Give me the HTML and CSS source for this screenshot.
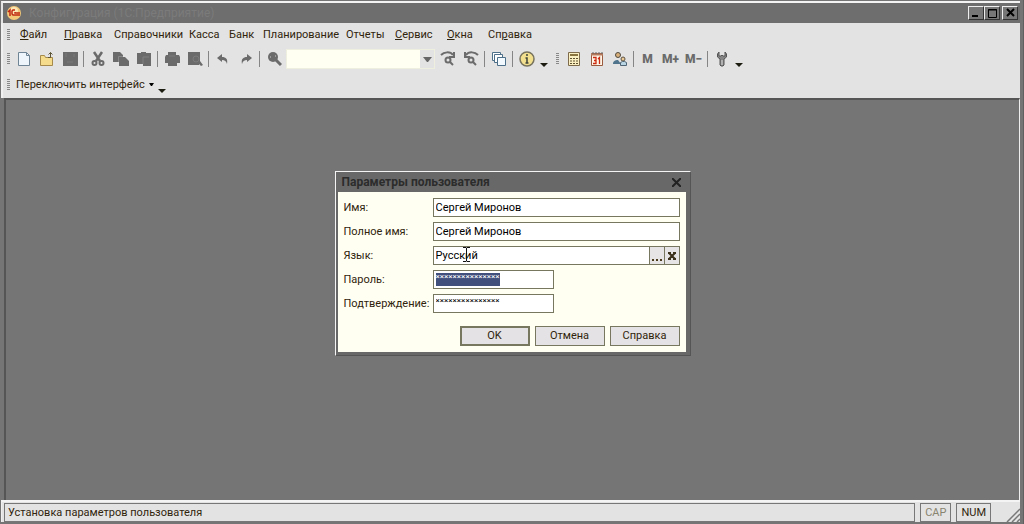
FILE: index.html
```
<!DOCTYPE html>
<html lang="ru">
<head>
  <meta charset="utf-8">
  <title>Параметры пользователя</title>
  <meta name="viewport" content="width=device-width, initial-scale=1">
  <link rel="stylesheet" href="styles.css">
</head>
<body>
  <div class="window">
    <header class="titlebar">
      <svg class="logo" viewBox="0 0 14 14"><circle cx="7" cy="7" r="7" fill="#f3c878"/><circle cx="7" cy="5" r="4" fill="#fbe6b4"/><path d="M1 6l2-2v6M8 4H6L5 5v3l1 1h7M8 6v1h5" fill="none" stroke="#c02a12" stroke-width="1.5"/></svg>
      <span class="caption">Конфигурация (1С:Предприятие)</span>
      <div class="win-buttons">
        <button type="button" aria-label="Свернуть"><svg viewBox="0 0 12 10"><path d="M2 8h6" stroke="#000" stroke-width="2"/></svg></button>
        <button type="button" aria-label="Развернуть"><svg viewBox="0 0 12 10"><path d="M2.500 1.500h8v8h-8zM2 2h9" fill="none" stroke="#000"/></svg></button>
        <button type="button" class="close" aria-label="Закрыть"><svg viewBox="0 0 12 10"><path d="M3 1l7 7M10 1L3 8" stroke="#000" stroke-width="2"/></svg></button>
      </div>
    </header>

    <div class="bars">
      <nav class="menu">
        <span class="grip"></span>
        <a href="#"><u>Ф</u>айл</a>
        <a href="#"><u>П</u>равка</a>
        <a href="#">Справочники</a>
        <a href="#">Касса</a>
        <a href="#">Банк</a>
        <a href="#">Планирование</a>
        <a href="#">Отчеты</a>
        <a href="#"><u>С</u>ервис</a>
        <a href="#"><u>О</u>кна</a>
        <a href="#">Сп<u>р</u>авка</a>
      </nav>

      <div class="toolbar">
        <span class="grip"></span>
        <button type="button" aria-label="Новый"><svg viewBox="0 0 16 16"><path d="M2.500 1.500h8l3 3v10h-11z" fill="#eef6fc" stroke="#6f8495"/><path d="M10.500 1.500v3h3" fill="none" stroke="#6f8495"/></svg></button>
        <button type="button" aria-label="Открыть"><svg viewBox="0 0 16 16"><path d="M1.500 4.500h4l1 2h7v8h-12z" fill="#f4dc8c" stroke="#a58a4c"/><path d="M9 6.500h2.500v-5M9.500 3.500l2-2 2 2" fill="none" stroke="#5e5436"/></svg></button>
        <button type="button" aria-label="Сохранить"><svg viewBox="0 0 16 16"><path d="M1 1h15v14H1z" fill="#6b6b6b"/><path d="M4 2v4M12 3v3M5 11h6" stroke="#7b7b7b"/></svg></button>
        <span class="sep"></span>
        <button type="button" aria-label="Вырезать"><svg viewBox="0 0 16 16"><path d="M4 1l6 9M12 1l-6 9" stroke="#6b6b6b" stroke-width="2.500"/><circle cx="4.500" cy="12" r="2" fill="none" stroke="#6b6b6b" stroke-width="2"/><circle cx="11.500" cy="12" r="2" fill="none" stroke="#6b6b6b" stroke-width="2"/></svg></button>
        <button type="button" aria-label="Копировать"><svg viewBox="0 0 16 16"><path d="M0 1h7l3 3v7H0zM6 6h6l4 4v5H6z" fill="#6b6b6b"/><path d="M5.500 11V5.500H10" fill="none" stroke="#888"/></svg></button>
        <button type="button" aria-label="Вставить"><svg viewBox="0 0 16 16"><path d="M1 2h4V1h5v1h5v13H7v-2H1z" fill="#6b6b6b"/><path d="M7 13V6h6" fill="none" stroke="#808080"/></svg></button>
        <span class="sep"></span>
        <button type="button" aria-label="Печать"><svg viewBox="0 0 16 16"><path d="M4 1h8v3h3l1 2v6h-3v3H4v-3H1V6l1-2h2z" fill="#6b6b6b"/><path d="M5 5h6" stroke="#7c7c7c"/></svg></button>
        <button type="button" aria-label="Просмотр"><svg viewBox="0 0 16 16"><path d="M1 1h12v9l3 4-2 1-2-2v1H1z" fill="#6b6b6b"/><circle cx="9" cy="8" r="3" fill="none" stroke="#7c7c7c"/></svg></button>
        <span class="sep"></span>
        <button type="button" aria-label="Отменить"><svg viewBox="0 0 16 16"><path d="M2 7l5-4v3c4 0 6 2 5 7-1-3-2-4-5-4v2z" fill="#6b6b6b"/></svg></button>
        <button type="button" aria-label="Вернуть"><svg viewBox="0 0 16 16"><path d="M14 7L9 3v3C5 6 3 8 4 13c1-3 2-4 5-4v2z" fill="#6b6b6b"/></svg></button>
        <span class="sep"></span>
        <button type="button" aria-label="Найти"><svg viewBox="0 0 16 16"><circle cx="7" cy="6" r="5" fill="#6b6b6b"/><path d="M10 9l5 5" stroke="#6b6b6b" stroke-width="3"/><path d="M4 6h1M9 5h1" stroke="#ccc"/></svg></button>
        <div class="search">
          <input type="text" aria-label="Строка поиска">
          <button type="button" aria-label="Список"><svg viewBox="0 0 9 5"><path d="M0 0h9L5 5H4z" fill="#666"/></svg></button>
        </div>
        <button type="button" aria-label="Найти далее"><svg viewBox="0 0 16 16"><path d="M1 4c3-3 9-4 12 0M14 1v5h-5" fill="none" stroke="#6b6b6b" stroke-width="2"/><circle cx="8" cy="9" r="2.500" fill="none" stroke="#6b6b6b" stroke-width="2"/><path d="M10 11l3 3" stroke="#6b6b6b" stroke-width="2"/></svg></button>
        <button type="button" aria-label="Найти ранее"><svg viewBox="0 0 16 16"><path d="M15 4C12 1 6 0 3 4M2 1v5h5" fill="none" stroke="#6b6b6b" stroke-width="2"/><circle cx="8" cy="9" r="2.500" fill="none" stroke="#6b6b6b" stroke-width="2"/><path d="M10 11l3 3" stroke="#6b6b6b" stroke-width="2"/></svg></button>
        <span class="sep"></span>
        <button type="button" aria-label="Окна"><svg viewBox="0 0 16 16"><g fill="#fff" stroke="#4d6f88"><path d="M1.500 1.500h8v8h-8z"/><path d="M3.500 3.500h8v8h-8z"/><path d="M6.500 6.500h8v8h-8z" fill="#f2f9ff"/></g></svg></button>
        <span class="sep"></span>
        <button type="button" aria-label="Информация"><svg viewBox="0 0 16 16"><circle cx="8" cy="8" r="7" fill="#f3e08f" stroke="#77735c" stroke-width="1.500"/><path d="M8 3v2M6.500 7H8v5M6.500 12h3" fill="none" stroke="#3f4338" stroke-width="1.500"/></svg></button>
        <button type="button" class="more" aria-label="Ещё"></button>
        <span class="grip"></span>
        <button type="button" aria-label="Калькулятор"><svg viewBox="0 0 16 16"><path d="M2.500 1.500h11v13h-11z" fill="#fbf0c2" stroke="#7d6b4b"/><path d="M4 4h8" stroke="#8a7440" stroke-width="2"/><path d="M4 7.500h8M4 10h8M4 12.500h8" stroke="#5c5030" stroke-dasharray="2 1"/></svg></button>
        <button type="button" aria-label="Календарь"><svg viewBox="0 0 16 16"><path d="M2.500 2.500h11v12h-11z" fill="#fff5e6" stroke="#9a5a40"/><path d="M2 3.500h12" stroke="#b5795c" stroke-width="2"/><path d="M4 1v2M7 1v2M10 1v2M13 1v2" stroke="#666"/><path d="M4 6.500h3v6H4M5 9.500h2M9 8l1.500-1.500V13" fill="none" stroke="#cc2a10" stroke-width="1.300"/></svg></button>
        <button type="button" aria-label="Пользователи"><svg viewBox="0 0 16 16"><circle cx="6" cy="4" r="2.500" fill="#d9b07a" stroke="#4f4a3e"/><path d="M1 13c0-3 2-4 5-4l3 4z" fill="#4f748c"/><circle cx="11" cy="8" r="2" fill="#ecca96" stroke="#5b5142"/><path d="M8.500 14.500v-3l2-1h2l2 1v3z" fill="#b9d4e2" stroke="#4f6575"/></svg></button>
        <span class="sep"></span>
        <button type="button" class="memory">M</button>
        <button type="button" class="memory">M+</button>
        <button type="button" class="memory">M−</button>
        <span class="sep"></span>
        <button type="button" aria-label="Настройка"><svg viewBox="0 0 16 16"><path d="M5 1L3.500 3v3L6 8v6l1 1h2l1-1V8l2.500-2V3L11 1v4H9L8 4 7 5H5z" fill="#858585" stroke="#555"/><path d="M8 9v5" stroke="#ddd"/></svg></button>
        <button type="button" class="more" aria-label="Ещё"></button>
      </div>

      <div class="toolbar interface-bar">
        <span class="grip"></span>
        <button type="button" class="switcher">Переключить интерфейс <svg viewBox="0 0 5 3"><path d="M0 0h5L3 3H2z"/></svg></button>
        <button type="button" class="more" aria-label="Ещё"></button>
      </div>
    </div>

    <main class="workspace">
      <form class="dialog">
        <div class="dialog-title">
          <h1>Параметры пользователя</h1>
          <button type="button" aria-label="Закрыть"><svg viewBox="0 0 9 9"><path d="M0 0l9 9M9 0L0 9" stroke="#222" stroke-width="2"/></svg></button>
        </div>
        <div class="fields">
          <label for="name">Имя:</label>
          <input type="text" id="name" value="Сергей Миронов">

          <label for="fullName">Полное имя:</label>
          <input type="text" id="fullName" value="Сергей Миронов">

          <label for="language">Язык:</label>
          <div class="picker">
            <input type="text" id="language" value="Русский">
            <button type="button" aria-label="Выбрать"><svg viewBox="0 0 14 16"><path d="M2 12h2M6 12h2M10 12h2" stroke="#4a3b1c" stroke-width="2"/></svg></button>
            <button type="button" aria-label="Очистить"><svg viewBox="0 0 14 16"><path d="M4 5l6 6M10 5l-6 6M3 5h3M8 5h3M3 11h3M8 11h3" stroke="#3d321c" stroke-width="2"/></svg></button>
            <svg class="cursor" viewBox="0 0 7 15"><path d="M0 .5h3l.5.5.5-.5h3M3.500 1v13M0 14.500h3l.5-.5.5.5h3" fill="none" stroke="#111"/></svg>
          </div>

          <label for="password">Пароль:</label>
          <div class="secret">
            <input type="text" id="password" class="selected" value="×××××××××××××××">
          </div>

          <label for="confirm">Подтверждение:</label>
          <div class="secret">
            <input type="text" id="confirm" value="×××××××××××××××">
          </div>
        </div>
        <div class="actions">
          <button type="button" class="default">OK</button>
          <button type="button">Отмена</button>
          <button type="button">Справка</button>
        </div>
      </form>
    </main>

    <footer class="status">
      <span class="message">Установка параметров пользователя</span>
      <span class="key off">CAP</span>
      <span class="key">NUM</span>
      <svg class="resize" viewBox="0 0 14 14"><path d="M1 14L14 1M6 14l8-8M11 14l3-3" stroke="#777" stroke-width="1.500"/></svg>
    </footer>
  </div>
</body>
</html>
```
FILE: styles.css
```
* {
  box-sizing: border-box;
}

body {
  margin: 0;
  font-family: Roboto, "Liberation Sans", sans-serif;
  font-size: 11px;
  line-height: 16px;
  color: #30240c;
}

button, input {
  font: inherit;
  color: inherit;
  margin: 0;
  padding: 0;
  border: 0;
  border-radius: 0;
}

button {
  background: none;
}

svg {
  display: block;
}

/* Главное окно */
.window {
  display: flex;
  flex-direction: column;
  min-height: 100vh;
  padding: 1px 3px 2px 1px;
  background: #757575;
  border-right: 1px solid #606060;
}

.titlebar {
  display: flex;
  align-items: center;
  height: 22px;
  padding: 0 2px 0 4px;
  border-top: 2px solid #f4f4f4;
  border-left: 2px solid #e4e4e4;
  background: #6e6e6e;
}

.logo {
  width: 14px;
  height: 14px;
}

.caption {
  flex: 1;
  padding-left: 8px;
  font-size: 12px;
  color: #7b7b7b;
}

.win-buttons {
  display: flex;
}

.win-buttons button {
  width: 16px;
  height: 14px;
  padding: 1px;
  border: 1px solid #333;
  border-top-color: #eee;
  border-left-color: #eee;
  background: #777;
}

.win-buttons svg {
  width: 12px;
  height: 10px;
}

.win-buttons .close {
  margin-left: 2px;
}

/* Меню и панели */
.bars {
  padding-left: 4px;
  border-left: 2px solid #f0f0f0;
  background: #e3e3e3;
}

.grip {
  flex: none;
  width: 3px;
  height: 12px;
  background: repeating-linear-gradient(#888 0 1px, #e3e3e3 1px 2px);
}

.menu {
  display: grid;
  grid-template-columns: 13px 44px 50px 75px 40px 34px 83px 49px 52px 41px 50px;
  align-items: center;
  height: 24px;
}

.menu a {
  color: inherit;
  text-decoration: none;
}

.toolbar {
  display: flex;
  align-items: center;
  height: 24px;
}

.toolbar > button {
  display: flex;
  flex: none;
  align-items: center;
  justify-content: center;
  width: 23px;
  height: 22px;
}

.toolbar > .grip:first-child {
  margin-right: 2px;
}

.toolbar > button svg {
  width: 16px;
  height: 16px;
}

.sep {
  width: 1px;
  height: 16px;
  margin: 0 2px;
  background: #858585;
}

.search {
  display: flex;
  width: 149px;
  height: 20px;
  margin: 0 1px;
  border: 1px solid #efefe0;
}

.search input {
  flex: 1;
  min-width: 0;
  background: #fffff2;
}

.search button {
  display: flex;
  align-items: center;
  justify-content: center;
  width: 14px;
}

.search svg {
  width: 9px;
  height: 5px;
}

.toolbar > .more {
  width: 12px;
}

.more::after {
  content: "";
  margin-top: 12px;
  border: 4px solid transparent;
  border-top-color: #1c1c10;
  border-bottom: 0;
}

.more + .grip {
  margin: 0 3px 0 6px;
}

.toolbar > .memory {
  color: #6b6b6b;
  font-size: 12px;
  font-weight: 900;
}

.interface-bar {
  height: 27px;
}

.toolbar > .switcher {
  gap: 4px;
  width: auto;
  padding: 0 2px 0 4px;
}

.toolbar > .switcher svg {
  width: 5px;
  height: 3px;
}

/* Рабочая область */
.workspace {
  display: flex;
  flex: 1;
  align-items: flex-start;
  justify-content: center;
  padding-top: 71px;
  border: 2px solid #555;
  border-right: 1px solid #eee;
  border-bottom: 0;
  margin-left: 3px;
  background: #757575;
}

.dialog {
  width: 356px;
  border: 1px solid #555;
  border-top-color: #f4f4f4;
  border-left-color: #f4f4f4;
  background: #686868;
  padding: 0 4px 3px 2px;
}

.dialog-title {
  display: flex;
  align-items: center;
  justify-content: space-between;
  height: 20px;
  padding: 0 5px 0 4px;
}

.dialog-title h1 {
  margin: 0;
  font-size: 12px;
  color: #2c2c2c;
}

.dialog-title svg {
  width: 9px;
  height: 9px;
}

.fields {
  display: grid;
  grid-template-columns: 84px 1fr;
  gap: 5px;
  align-items: center;
  padding: 6px 6px 0;
  background: #fffff2;
}

.fields input {
  width: 100%;
  height: 19px;
  padding: 0 2px;
  border: 1px solid #77775f;
  background: #fff;
  color: #000;
}

.picker,
.secret {
  display: flex;
  position: relative;
}

.picker input {
  flex: 1;
  min-width: 0;
}

.picker button {
  width: 15px;
  height: 19px;
  border: 1px solid #77775f;
  border-left: 0;
  background: #e6e4e4;
}

.picker svg {
  width: 14px;
  height: 16px;
}

.picker .cursor {
  position: absolute;
  left: 30px;
  top: 1px;
  width: 7px;
  height: 15px;
}

.fields .secret input {
  width: 121px;
  padding-bottom: 6px;
  font-size: 8px;
}

.fields .secret .selected {
  color: #fff;
  background: linear-gradient(#414f7d, #414f7d) 2px 2px / 64px 13px no-repeat #fff;
}

.actions {
  display: flex;
  justify-content: flex-end;
  gap: 5px;
  padding: 13px 6px 6px;
  background: #fffff2;
}

.actions button {
  width: 70px;
  height: 20px;
  border: 1px solid #77775f;
  background: #e4e2e4;
}

.actions .default {
  border-width: 2px;
}

/* Строка состояния */
.status {
  display: flex;
  align-items: center;
  gap: 5px;
  height: 22px;
  padding-left: 2px;
  border-top: 2px solid #f4f4f4;
  border-left: 1px solid #f0f0f0;
  background: #e3e3e3;
}

.status span {
  height: 19px;
  padding: 0 3px;
  border: 1px solid #777;
  line-height: 18px;
}

.status .message {
  flex: 1;
}

.status .key {
  padding: 0 4px;
  text-align: center;
}

.status .off {
  color: #88846f;
}

.resize {
  align-self: flex-end;
  width: 14px;
  height: 14px;
  margin-left: 10px;
}
```
